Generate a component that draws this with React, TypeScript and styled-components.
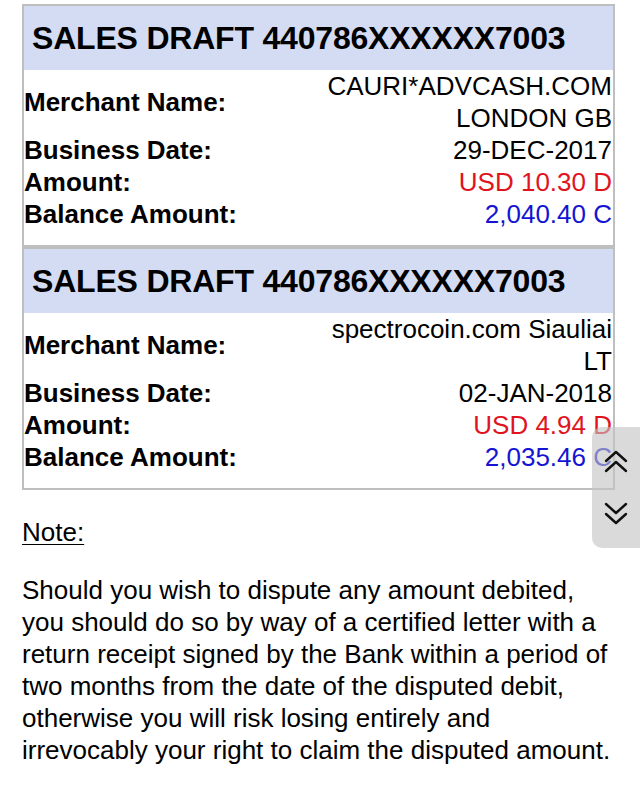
import React from "react";
import styled, { createGlobalStyle } from "styled-components";

const GlobalStyle = createGlobalStyle`
  html, body { margin: 0; padding: 0; background: #ffffff; }
  body { font-family: "Liberation Sans", Arial, Helvetica, sans-serif; color: #000; }
  * { box-sizing: border-box; }
`;

const Page = styled.div`
  position: relative;
  width: 640px;
  min-height: 793px;
  padding: 4px 0 0 22px;
  overflow: hidden;
`;

const CardList = styled.div`
  display: flex;
  flex-direction: column;
  width: 593px;
`;

const Card = styled.section`
  border: 2px solid #bfbfbf;
  background: #fff;
`;

const Header = styled.h2`
  margin: 0;
  height: 64px;
  display: flex;
  align-items: center;
  padding: 0 8px;
  background: #d4dcf4;
  font-size: 32px;
  font-weight: 700;
  letter-spacing: -0.2px;
  white-space: nowrap;
`;

const Body = styled.div`
  display: flex;
  flex-direction: column;
  padding: 0 1px 15px 0;
`;

const Row = styled.div`
  display: flex;
  align-items: center;
  justify-content: space-between;
  font-size: 26px;
  line-height: 32px;
`;

const Label = styled.span`
  font-weight: 700;
  white-space: nowrap;
`;

const Value = styled.span<{ $tone?: "debit" | "credit" }>`
  max-width: 300px;
  text-align: right;
  color: ${(p) => (p.$tone === "debit" ? "#e0141e" : p.$tone === "credit" ? "#1414d2" : "#000")};
`;

const Note = styled.div`
  margin-top: 26px;
  width: 600px;
  font-size: 26px;
  line-height: 32px;
`;

const NoteTitle = styled.div`
  text-decoration: underline;
  text-underline-offset: 3px;
  text-decoration-thickness: 1px;
`;

const NoteText = styled.p`
  margin: 26px 0 0;
`;

const ScrollPanel = styled.div`
  position: absolute;
  left: 592px;
  top: 427px;
  width: 48px;
  height: 121px;
  border-radius: 10px 0 0 10px;
  background: rgba(195, 195, 195, 0.62);
  display: flex;
  flex-direction: column;
  align-items: center;
  justify-content: space-between;
  padding: 22px 0 22px;
`;

const ScrollButton = styled.button`
  border: 0;
  background: transparent;
  padding: 0;
  width: 30px;
  height: 26px;
  display: flex;
  align-items: center;
  justify-content: center;
  cursor: pointer;
`;

const Chevrons = ({ up }: { up?: boolean }) => (
  <svg width="26" height="24" viewBox="0 0 26 24" fill="none" stroke="#111" strokeWidth="2.4" strokeLinecap="round" strokeLinejoin="round">
    {up ? (
      <>
        <path d="M3 11 L13 2 L23 11" />
        <path d="M3 21 L13 12 L23 21" />
      </>
    ) : (
      <>
        <path d="M3 3 L13 12 L23 3" />
        <path d="M3 13 L13 22 L23 13" />
      </>
    )}
  </svg>
);

type Draft = {
  merchant: string;
  date: string;
  amount: string;
  balance: string;
};

const drafts: Draft[] = [
  { merchant: "CAURI*ADVCASH.COM LONDON GB", date: "29-DEC-2017", amount: "USD 10.30 D", balance: "2,040.40 C" },
  { merchant: "spectrocoin.com Siauliai LT", date: "02-JAN-2018", amount: "USD 4.94 D", balance: "2,035.46 C" },
];

export default function App() {
  return (
    <>
      <GlobalStyle />
      <Page>
        <CardList>
          {drafts.map((d, i) => (
            <Card key={i}>
              <Header>SALES DRAFT 440786XXXXXX7003</Header>
              <Body>
                <Row>
                  <Label>Merchant Name:</Label>
                  <Value>{d.merchant}</Value>
                </Row>
                <Row>
                  <Label>Business Date:</Label>
                  <Value>{d.date}</Value>
                </Row>
                <Row>
                  <Label>Amount:</Label>
                  <Value $tone="debit">{d.amount}</Value>
                </Row>
                <Row>
                  <Label>Balance Amount:</Label>
                  <Value $tone="credit">{d.balance}</Value>
                </Row>
              </Body>
            </Card>
          ))}
        </CardList>
        <Note>
          <NoteTitle>Note:</NoteTitle>
          <NoteText>
            Should you wish to dispute any amount debited, you should do so by way of a certified letter with a
            return receipt signed by the Bank within a period of two months from the date of the disputed debit,
            otherwise you will risk losing entirely and irrevocably your right to claim the disputed amount.
          </NoteText>
        </Note>
        <ScrollPanel>
          <ScrollButton aria-label="Scroll up">
            <Chevrons up />
          </ScrollButton>
          <ScrollButton aria-label="Scroll down">
            <Chevrons />
          </ScrollButton>
        </ScrollPanel>
      </Page>
    </>
  );
}
